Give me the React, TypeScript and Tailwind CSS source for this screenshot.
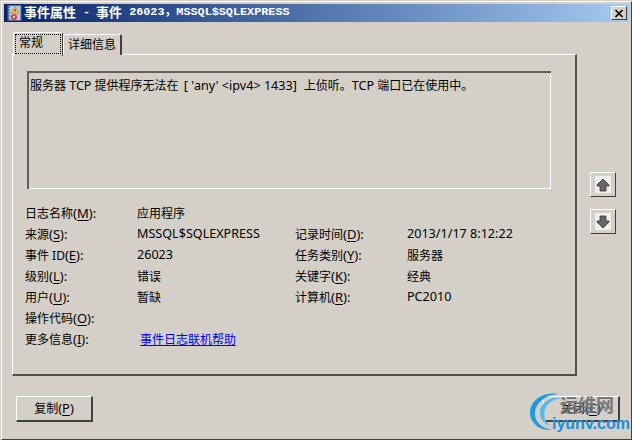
import React from 'react';

const cjk = '"Noto Sans","Noto Sans CJK SC",sans-serif';

function Latin({ children }: { children: React.ReactNode }) {
  return <span className="text-[12.6px]">{children}</span>;
}

// label such as 来源(S):
function Label({ zh, k, colon = true }: { zh: string; k: string; colon?: boolean }) {
  return (
    <>
      {zh}
      <span className="text-[13px]">
        (<span className="underline underline-offset-2">{k}</span>){colon ? ':' : ''}
      </span>
    </>
  );
}

function Field({ label, value }: { label: React.ReactNode; value?: React.ReactNode }) {
  return (
    <>
      <div className="whitespace-nowrap">{label}</div>
      <div className="whitespace-nowrap">{value}</div>
    </>
  );
}

function ArrowButton({ up }: { up?: boolean }) {
  return (
    <button className="w-[26px] h-[25px] flex items-center justify-center bg-[#d4d0c8] border border-t-white border-l-white border-r-[#404040] border-b-[#404040]">
      <span className="w-[16px] h-[17px] bg-[#f1f0ec] flex items-center justify-center">
        <svg width="14" height="14" viewBox="0 0 14 14">
          <path
            d={up ? 'M7 1 L13 7 V8 H10 V13 H4 V8 H1 V7 Z' : 'M4 1 H10 V6 H13 V7 L7 13 L1 7 V6 H4 Z'}
            fill="#666666"
            stroke="#333333"
            strokeWidth="0.8"
          />
        </svg>
      </span>
    </button>
  );
}

function DialogButton({ zh, k }: { zh: string; k: string }) {
  return (
    <button className="w-[77px] h-[26px] text-[12px] text-black bg-[#d4d0c8] border-2 border-t-white border-l-white border-t-[1px] border-l-[1px] border-r-[#404040] border-b-[#404040] flex items-center justify-center">
      <span>
        <Label zh={zh} k={k} colon={false} />
      </span>
    </button>
  );
}

export default function App() {
  return (
    <div
      className="relative w-[632px] h-[440px] overflow-hidden bg-[#d4d0c8] text-black text-[12px] pt-px pl-px"
      style={{ fontFamily: cjk }}
    >
      <div className="h-[439px] w-[631px] border border-t-white border-l-white border-r-[#404040] border-b-[#404040] p-[2px] flex flex-col">
        {/* title bar */}
        <div className="h-[18px] shrink-0 flex items-center pl-[2px] pr-[2px] bg-gradient-to-r from-[#0a246a] to-[#a6caf0] text-white">
          <svg width="16" height="16" viewBox="0 0 16 16" className="shrink-0">
            <rect x="2" y="0.5" width="13" height="15" fill="#b8c8e4" stroke="#50658f" />
            <path d="M1 2h3M1 5h3M1 8h3M1 11h3M1 14h3" stroke="#2c3c60" strokeWidth="1" />
            <path d="M9 2 L13 8 H5 Z" fill="#f3d24a" stroke="#8b6a10" strokeWidth="0.5" />
            <rect x="8.6" y="4" width="1" height="2.5" fill="#222222" />
            <circle cx="8" cy="12" r="3" fill="#d8373a" />
            <circle cx="8" cy="12" r="1.2" fill="#f4e8e8" />
          </svg>
          <span className="ml-[2px] text-[13px] font-bold whitespace-nowrap">事件属性</span>
          <span className="ml-[7px] text-[11.8px] font-bold font-['Liberation_Mono'] whitespace-nowrap">-</span>
          <span className="ml-[6px] text-[13px] font-bold whitespace-nowrap">事件</span>
          <span className="ml-[7px] text-[11.8px] font-bold font-['Liberation_Mono',_'Noto_Sans_CJK_SC'] whitespace-pre">26023，MSSQL$SQLEXPRESS</span>
          <button className="ml-auto w-[16px] h-[14px] flex items-center justify-center bg-[#d4d0c8] border border-t-white border-l-white border-r-[#404040] border-b-[#404040]">
            <svg width="10" height="9" viewBox="0 0 10 9">
              <path d="M1.5 1 L8.5 8 M8.5 1 L1.5 8" stroke="#000000" strokeWidth="1.7" />
            </svg>
          </button>
        </div>

        <div className="flex-1 flex flex-col pl-[8px]">
          {/* tabs */}
          <div className="flex items-start h-[23px] mt-[10px] relative z-10 -mb-px pl-[1px]">
            <div className="w-[50px] h-[24px] bg-[#d4d0c8] border border-b-0 border-t-white border-l-white border-r-[#404040] rounded-t-[2px] p-[1px] pb-[2px]">
              <div className="h-full border border-dotted border-black flex items-center pl-[3px] pb-[2px]">常规</div>
            </div>
            <div className="w-[59px] h-[21px] mt-[2px] bg-[#d4d0c8] border border-b-0 border-t-white border-l-white border-r-2 border-r-[#404040] rounded-t-[2px] flex items-center pl-[4px]">
              详细信息
            </div>
          </div>

          <div className="flex items-start">
            {/* panel */}
            <div className="w-[565px] h-[322px] border border-t-white border-l-white border-r-2 border-b-2 border-r-[#505050] border-b-[#505050] pt-[16px] pl-[14px]">
              <div className="w-[524px] h-[118px] border-2 border-t-[#606060] border-l-[#606060] border-r-0 border-b-0 relative pl-[1px] pt-[4px]">
                服务器 <Latin>TCP</Latin> 提供程序无法在 <span className="ml-[2px]"><Latin>[ 'any' &lt;ipv4&gt; 1433]</Latin></span><span className="ml-[7px]">上侦听。</span><Latin>TCP</Latin> 端口已在使用中。
                <div className="absolute right-0 bottom-0 w-full h-full border-r border-b border-white pointer-events-none" />
              </div>
              <div className="grid grid-cols-[112px_158px_112px_1fr] auto-rows-[21px] items-center mt-[14px] -ml-[2px]">
                <Field label={<Label zh="日志名称" k="M" />} value="应用程序" />
                <div className="col-span-2" />
                <Field label={<Label zh="来源" k="S" />} value={<Latin>MSSQL$SQLEXPRESS</Latin>} />
                <Field label={<Label zh="记录时间" k="D" />} value={<Latin>2013/1/17 8:12:22</Latin>} />
                <Field label={<Label zh="事件 ID" k="E" />} value={<Latin>26023</Latin>} />
                <Field label={<Label zh="任务类别" k="Y" />} value="服务器" />
                <Field label={<Label zh="级别" k="L" />} value="错误" />
                <Field label={<Label zh="关键字" k="K" />} value="经典" />
                <Field label={<Label zh="用户" k="U" />} value="暂缺" />
                <Field label={<Label zh="计算机" k="R" />} value={<Latin>PC2010</Latin>} />
                <Field label={<Label zh="操作代码" k="O" />} />
                <div className="col-span-2" />
                <Field
                  label={<Label zh="更多信息" k="I" />}
                  value={<span className="ml-[3px] text-[#0000ff] underline">事件日志联机帮助</span>}
                />
                <div className="col-span-2" />
              </div>
            </div>

            {/* prev / next */}
            <div className="flex flex-col gap-[12px] ml-[13px] mt-[118px]">
              <ArrowButton up />
              <ArrowButton />
            </div>
          </div>

          <div className="flex justify-between items-start mt-[20px] pl-[4px] pr-[9px]">
            <DialogButton zh="复制" k="P" />
            <DialogButton zh="关闭" k="C" />
          </div>
        </div>
      </div>

      {/* watermark */}
      <div className="absolute left-[528px] top-[392px] w-[102px] h-[44px] pointer-events-none">
        <svg width="50" height="42" viewBox="0 0 50 42" className="absolute left-0 top-0">
          <path d="M30 2 C14 -1 1 10 2 22 C3 33 14 39 24 38 C12 36 6 28 7 20 C8 10 18 3 30 2 Z" fill="#1e9be0" />
          <path d="M34 6 C22 3 11 12 12 22 C13 28 17 32 22 34 C17 29 15 24 17 18 C19 11 26 7 34 6 Z" fill="#5bb8ea" />
        </svg>
        <span className="absolute left-[32px] top-[1px] text-[18px] leading-[24px] font-bold text-[#6e6e6e] whitespace-nowrap opacity-90">运维网</span>
        <span className="absolute left-[24px] top-[22px] text-[16px] leading-[20px] font-bold text-[#1b8fd8] font-['Liberation_Sans'] whitespace-nowrap">iyunv.com</span>
      </div>
    </div>
  );
}
